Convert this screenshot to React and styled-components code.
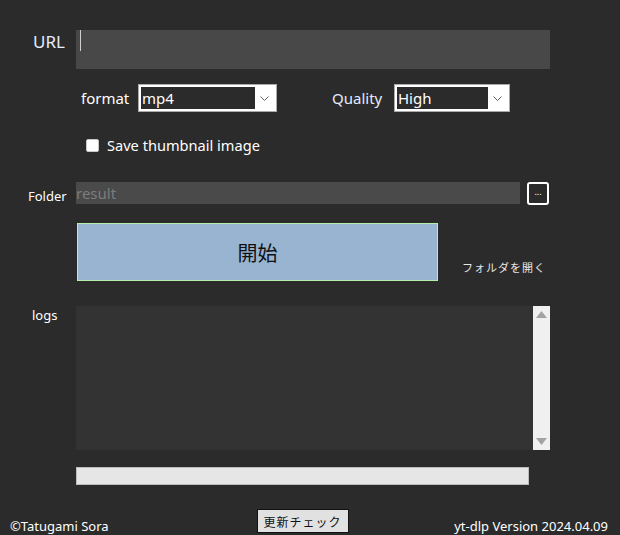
import React from "react";
import styled, { createGlobalStyle } from "styled-components";

const Global = createGlobalStyle`
  html, body { margin: 0; padding: 0; background: #2b2b2b; }
  body { font-family: "Segoe UI", "Noto Sans", "Noto Sans CJK JP", sans-serif; }
`;

const Page = styled.div`
  width: 620px;
  height: 535px;
  background: #2b2b2b;
  color: #ffffff;
  position: relative;
  overflow: hidden;
  display: flex;
  flex-direction: column;
`;

const Row = styled.div`
  display: flex;
  align-items: ${(p) => p.$align || "center"};
  margin-top: ${(p) => p.$top || 0}px;
  height: ${(p) => p.$h}px;
`;

const Label = styled.div`
  width: ${(p) => p.$w || 76}px;
  padding-left: ${(p) => p.$indent || 0}px;
  box-sizing: border-box;
  font-size: ${(p) => p.$size || 13}px;
  color: ${(p) => p.$color || "#ffffff"};
  flex: none;
  margin-top: ${(p) => p.$mt || 0}px;
  line-height: 1.2;
`;

const UrlInput = styled.div`
  width: 474px;
  height: 39px;
  background: #484848;
  position: relative;
  &::after {
    content: "";
    position: absolute;
    left: 4px;
    top: 0;
    width: 1px;
    height: 21px;
    background: #cfcfcf;
  }
`;

const OptLabel = styled.span`
  font-size: 15px;
  color: ${(p) => p.$color || "#ffffff"};
  margin-left: ${(p) => p.$ml || 0}px;
  width: ${(p) => p.$w}px;
  flex: none;
`;

const Select = styled.div`
  width: ${(p) => p.$w}px;
  height: 28px;
  box-sizing: border-box;
  background: #ffffff;
  border: 1px solid #aaaaaa;
  padding: 2px;
  display: flex;
  align-items: stretch;
  flex: none;
`;

const SelectValue = styled.div`
  flex: 1;
  background: #2b2b2b;
  color: #ffffff;
  font-size: 15px;
  line-height: 22px;
  padding-left: 1px;
`;

const Chevron = styled.div`
  width: 19px;
  display: flex;
  align-items: center;
  justify-content: center;
`;

const CheckRow = styled.label`
  display: flex;
  align-items: center;
  margin-left: 86px;
  font-size: 14.6px;
  color: #ffffff;
  gap: 8px;
`;

const Box = styled.span`
  width: 11px;
  height: 11px;
  border-radius: 2px;
  background: #ffffff;
  border: 1px solid #c8c8c8;
  display: inline-block;
`;

const FolderInput = styled.div`
  width: 444px;
  height: 22px;
  background: #4a4a4a;
  color: #7c7c7c;
  font-size: 15px;
  line-height: 22px;
`;

const BrowseBtn = styled.div`
  width: 22px;
  height: 23px;
  box-sizing: border-box;
  margin-left: 7px;
  border: 2px solid #ffffff;
  border-radius: 3px;
  background: #2b2b2b;
  color: #ffffff;
  font-size: 9px;
  line-height: 15px;
  text-align: center;
`;

const StartBtn = styled.div`
  width: 361px;
  height: 58px;
  margin-left: 77px;
  box-sizing: border-box;
  background: #98b4d1;
  border: 1px solid #b4f0aa;
  display: flex;
  align-items: center;
  justify-content: center;
  color: #111111;
  font-size: 20px;
  font-family: "Noto Sans CJK JP", sans-serif;
`;

const OpenLink = styled.span`
  font-size: 11px;
  color: #e8e8e8;
  margin-left: 24px;
  align-self: flex-end;
  margin-bottom: 6px;
  letter-spacing: 1px;
  font-family: "Noto Sans CJK JP", sans-serif;
`;

const LogBox = styled.div`
  width: 474px;
  height: 144px;
  background: #333333;
  display: flex;
  justify-content: flex-end;
`;

const ScrollBar = styled.div`
  width: 17px;
  background: #f0f0f0;
  display: flex;
  flex-direction: column;
  justify-content: space-between;
  align-items: center;
  padding: 5px 0;
  box-sizing: border-box;
`;

const Progress = styled.div`
  margin-left: 76px;
  width: 453px;
  height: 18px;
  box-sizing: border-box;
  background: #e6e6e6;
  border: 1px solid #bcbcbc;
`;

const Footer = styled.div`
  margin-top: 24px;
  display: flex;
  align-items: flex-end;
  padding: 0 12px 0 10px;
  height: 24px;
`;

const FooterText = styled.span`
  font-size: 13px;
  color: #ffffff;
  line-height: 16px;
  margin-bottom: -1px;
  margin-left: ${(p) => (p.$right ? "auto" : "0")};
`;

const UpdateBtn = styled.div`
  width: 92px;
  height: 24px;
  box-sizing: border-box;
  background: #e1e1e1;
  border: 1px solid #111111;
  color: #111111;
  font-size: 12px;
  display: flex;
  align-items: center;
  justify-content: center;
  letter-spacing: 1px;
  margin-left: 148px;
  font-family: "Noto Sans CJK JP", sans-serif;
`;

const Arrow = ({ up }) => (
  <svg width="11" height="7" viewBox="0 0 11 7">
    <polygon points={up ? "5.5,0 11,7 0,7" : "0,0 11,0 5.5,7"} fill="#a3a3a3" />
  </svg>
);

const ChevronIcon = () => (
  <svg width="9" height="5" viewBox="0 0 9 5">
    <polyline points="0.5,0.5 4.5,4.5 8.5,0.5" fill="none" stroke="#606060" strokeWidth="1" />
  </svg>
);

export default function App() {
  return (
    <Page>
      <Global />
      <Row $top={30} $h={39} $align="flex-start">
        <Label $indent={33} $size={17} $color="#e4ecff" $mt={2}>URL</Label>
        <UrlInput />
      </Row>
      <Row $top={15} $h={28}>
        <OptLabel $ml={81} $w={57}>format</OptLabel>
        <Select $w={139}>
          <SelectValue>mp4</SelectValue>
          <Chevron><ChevronIcon /></Chevron>
        </Select>
        <OptLabel $ml={55} $w={62} $color="#e4ecff">Quality</OptLabel>
        <Select $w={116}>
          <SelectValue>High</SelectValue>
          <Chevron><ChevronIcon /></Chevron>
        </Select>
      </Row>
      <Row $top={22} $h={22}>
        <CheckRow>
          <Box />
          Save thumbnail image
        </CheckRow>
      </Row>
      <Row $top={25} $h={24}>
        <Label $indent={28} $size={13} $mt={7}>Folder</Label>
        <FolderInput>result</FolderInput>
        <BrowseBtn>...</BrowseBtn>
      </Row>
      <Row $top={18} $h={58}>
        <StartBtn>開始</StartBtn>
        <OpenLink>フォルダを開く</OpenLink>
      </Row>
      <Row $top={25} $h={144} $align="flex-start">
        <Label $indent={32} $size={13} $mt={2}>logs</Label>
        <LogBox>
          <ScrollBar>
            <Arrow up />
            <Arrow />
          </ScrollBar>
        </LogBox>
      </Row>
      <Row $top={17} $h={18}>
        <Progress />
      </Row>
      <Footer>
        <FooterText>©Tatugami Sora</FooterText>
        <UpdateBtn>更新チェック</UpdateBtn>
        <FooterText $right>yt-dlp Version 2024.04.09</FooterText>
      </Footer>
    </Page>
  );
}
